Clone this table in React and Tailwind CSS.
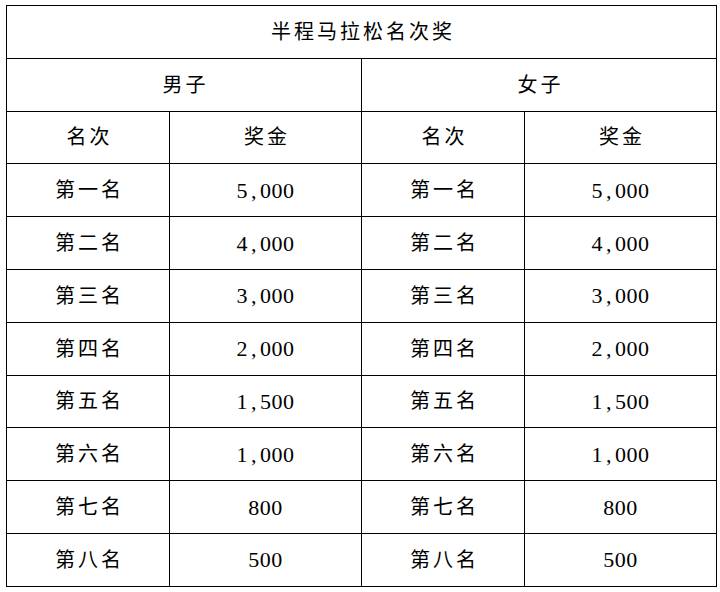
function App() {
  const rows = [
    ["第一名", "5,000"],
    ["第二名", "4,000"],
    ["第三名", "3,000"],
    ["第四名", "2,000"],
    ["第五名", "1,500"],
    ["第六名", "1,000"],
    ["第七名", "800"],
    ["第八名", "500"],
  ];

  const cell = "border-[1.5px] border-black text-center align-middle pl-[3px] h-[52.8px] p-0";
  const num = "border-[1.5px] border-black text-center align-middle h-[52.8px] p-0 text-[22px] tracking-[0.5px]";

  // SimSun-style wide comma
  const amount = (v) => {
    const parts = v.split(",");
    if (parts.length === 1) return v;
    return (
      <>
        {parts[0]}
        <span className="mx-[3px]">,</span>
        {parts[1]}
      </>
    );
  };

  return (
    <div
      className="w-[720px] h-[592px] bg-white pl-[6px] pt-[5px] text-black text-[20px] tracking-[3px]"
      style={{ fontFamily: '"Liberation Serif", "Noto Sans CJK SC", serif' }}
    >
      <table className="border-collapse table-fixed w-[710px]">
        <colgroup>
          <col className="w-[163px]" />
          <col className="w-[192px]" />
          <col className="w-[163px]" />
          <col className="w-[192px]" />
        </colgroup>
        <tbody>
          <tr>
            <td colSpan={4} className={cell}>
              半程马拉松名次奖
            </td>
          </tr>
          <tr>
            <td colSpan={2} className={cell}>
              男子
            </td>
            <td colSpan={2} className={cell}>
              女子
            </td>
          </tr>
          <tr>
            <td className={cell}>名次</td>
            <td className={cell}>奖金</td>
            <td className={cell}>名次</td>
            <td className={cell}>奖金</td>
          </tr>
          {rows.map((r, i) => (
            <tr key={i}>
              <td className={cell}>{r[0]}</td>
              <td className={num}>{amount(r[1])}</td>
              <td className={cell}>{r[0]}</td>
              <td className={num}>{amount(r[1])}</td>
            </tr>
          ))}
        </tbody>
      </table>
    </div>
  );
}

export default App;
